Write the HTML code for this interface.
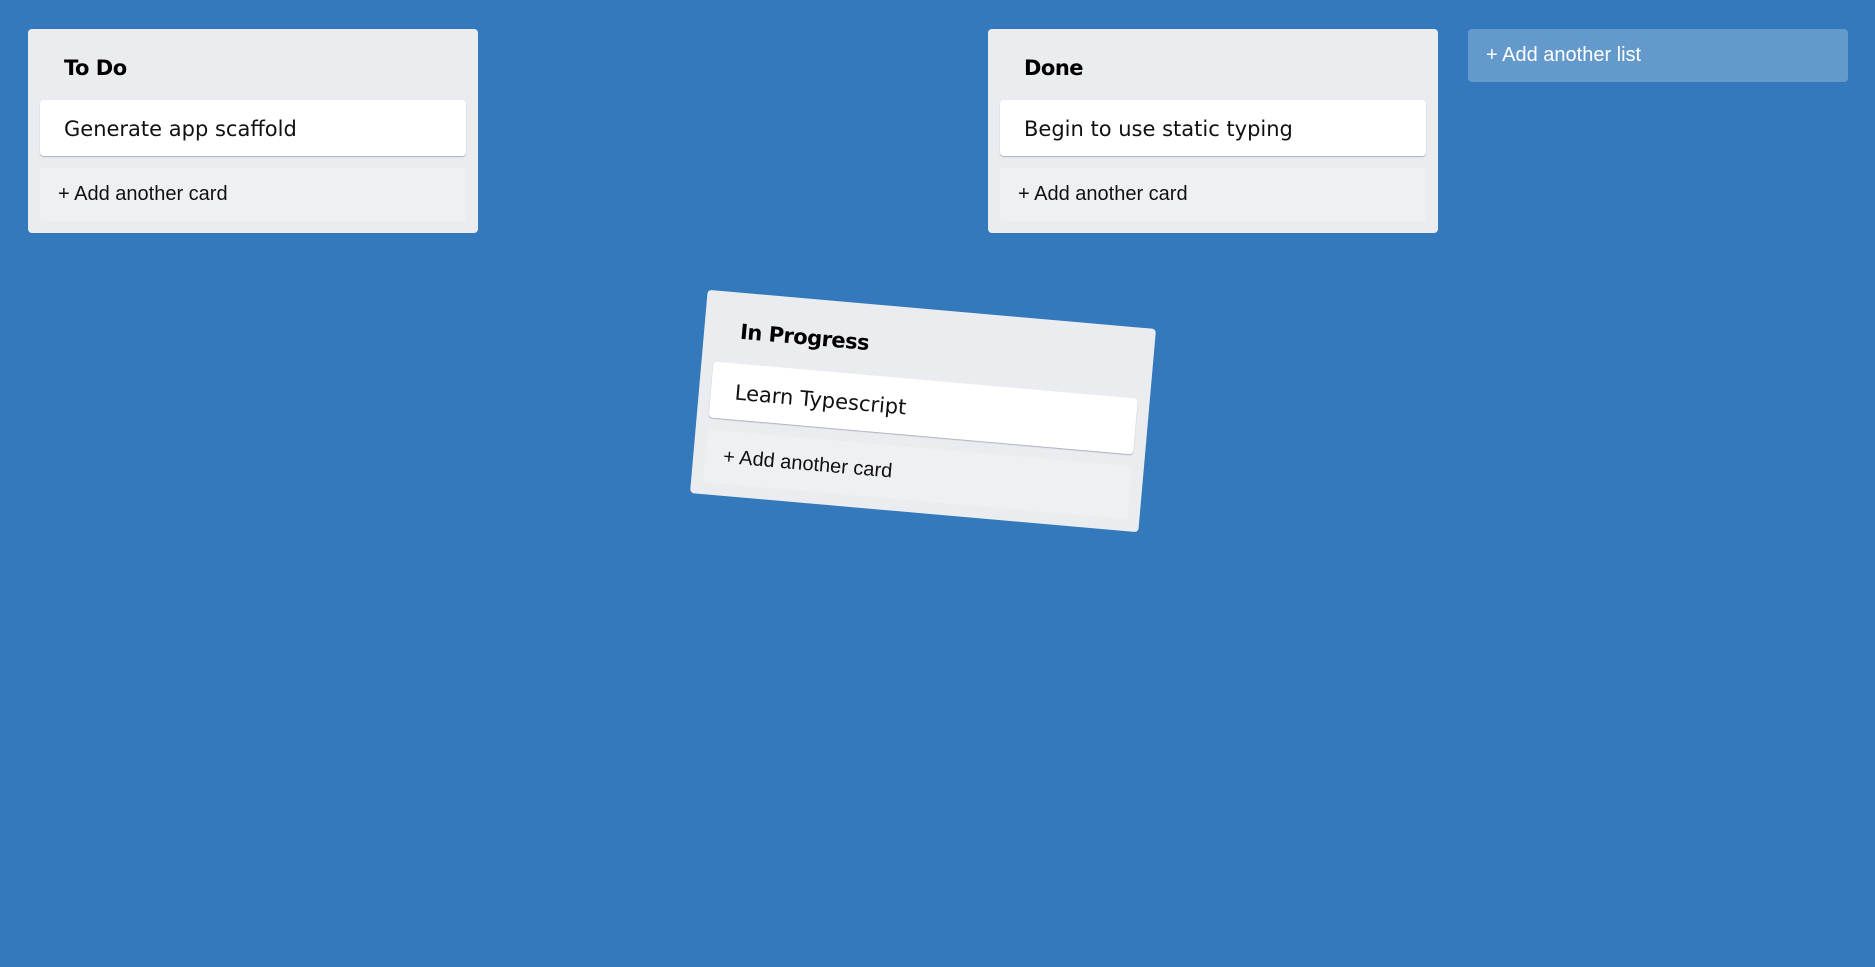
<!DOCTYPE html>
<html><head><style>
body{margin:0;width:1875px;height:967px;background:#3379bb;font-family:"Liberation Sans","DejaVu Sans",sans-serif;position:relative;overflow:hidden}
.list{position:absolute;width:450px;height:204px;background:#ebecf0;border-radius:4px;box-sizing:border-box}
.title{position:absolute;left:36px;top:27px;font-weight:bold;color:#000;font-family:"DejaVu Sans",sans-serif;font-size:21px;letter-spacing:-0.5px}
.card{position:absolute;left:12px;top:71px;width:426px;height:56px;background:#fff;border-radius:4px;box-shadow:0 1px 1px #a8aeb9;}
.card span{position:absolute;left:24px;top:17px;color:#111;font-family:"DejaVu Sans",sans-serif;font-size:21px}
.add{position:absolute;left:12px;top:139px;width:426px;height:53px;background:#eff0f3;border-radius:4px}
.add span{position:absolute;left:18px;top:15px;font-size:20px;color:#111}
.newlist{position:absolute;left:1468px;top:29px;width:380px;height:53px;background:#6499cb;border-radius:4px;color:#fff;font-size:20px}
.newlist span{position:absolute;left:18px;top:15px}
</style></head><body>
<div class="list" style="left:28px;top:29px"><div class="title">To Do</div><div class="card"><span>Generate app scaffold</span></div><div class="add"><span>+ Add another card</span></div></div>
<div class="list" style="left:988px;top:29px"><div class="title">Done</div><div class="card"><span>Begin to use static typing</span></div><div class="add"><span>+ Add another card</span></div></div>
<div class="list" style="left:698px;top:309px;transform:rotate(5deg)"><div class="title">In Progress</div><div class="card"><span>Learn Typescript</span></div><div class="add"><span>+ Add another card</span></div></div>
<div class="newlist"><span>+ Add another list</span></div>
</body></html>
